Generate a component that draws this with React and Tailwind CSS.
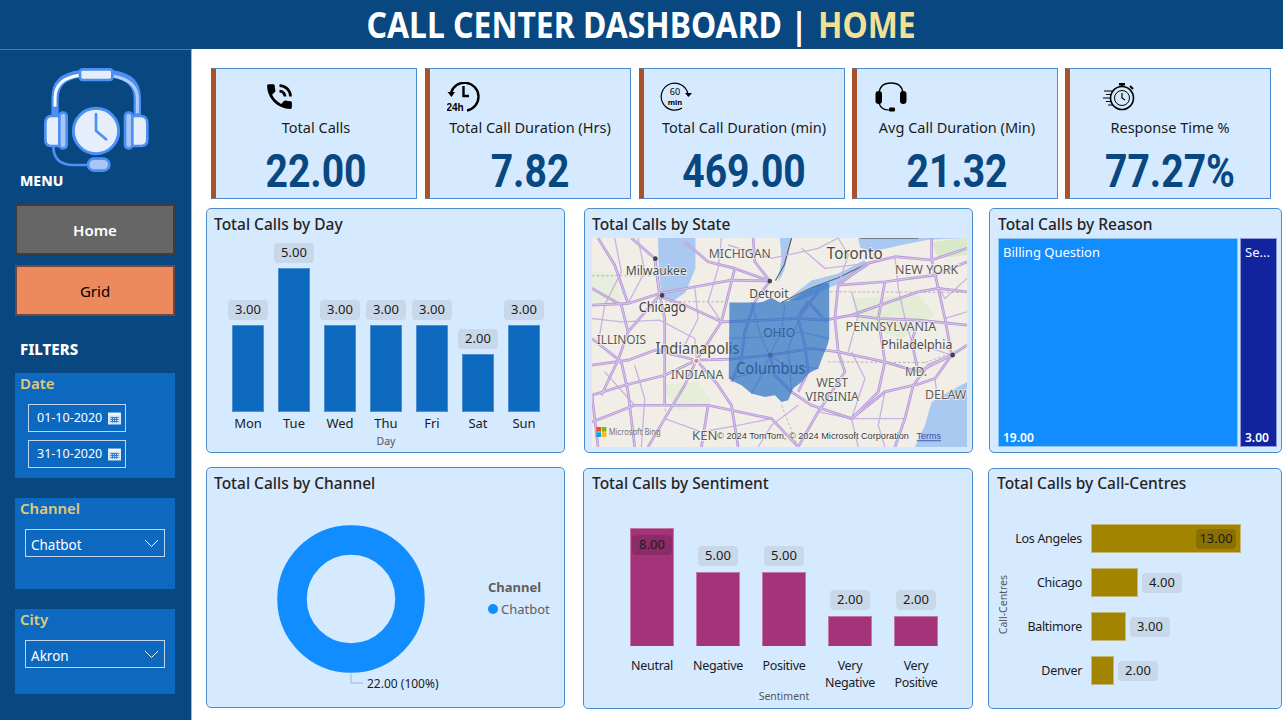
import { MdPhoneInTalk } from "react-icons/md";

const ROADS = [
  "M22 300 L130 295 L225 265 L330 245 L440 225 L555 228",
  "M225 275 L300 300 L410 350 L540 345 L640 340 L720 345 L800 330 L880 340 L1000 345 L1146 360",
  "M22 480 L130 465 L210 435 L335 465 L434 462 L555 450 L680 430 L760 440 L900 470 L1000 500 L1100 450",
  "M22 570 L120 540 L240 510 L335 465",
  "M335 465 L300 540 L240 640 L190 725",
  "M335 465 L400 540 L440 600 L460 725",
  "M555 450 L570 510 L620 560 L680 600 L800 640 L900 560 L985 540",
  "M210 160 L225 270 L240 340 L240 600",
  "M140 99 L210 160 L225 270",
  "M225 270 L130 380 L100 465 L50 570",
  "M555 228 L510 290 L480 380 L470 460 L440 530",
  "M555 228 L510 170 L505 99",
  "M555 228 L450 190 L370 170 L300 110",
  "M450 190 L410 350 L335 465",
  "M720 345 L670 290 L650 320 L640 340 L660 420 L670 500 L640 560",
  "M848 175 L760 240 L750 340 L760 440 L780 500 L700 620 L640 725",
  "M848 175 L930 155 L1040 165 L1146 130",
  "M1040 100 L1040 165 L1060 250 L1080 340 L1100 450 L1050 520 L990 540",
  "M760 240 L900 230 L1050 210 L1146 170",
  "M880 340 L900 470 L880 560 L800 640",
  "M22 650 L150 600 L370 600 L560 640 L640 725",
  "M370 600 L350 725",
  "M22 400 L110 470 L130 560 L150 725",
  "M985 540 L960 640 L930 725",
  "M985 540 L1030 480 L1100 450 L1146 420",
  "M1000 345 L980 410 L1000 500",
  "M800 330 L1000 260 L1060 250 L1146 260",
  "M22 250 L110 300 L130 380",
  "M40 99 L90 180 L130 295",
  "M640 340 L700 260",
  "M900 230 L880 340",
  "M22 570 L40 725",
];

const MINOR_ROADS = [
  "M22 340 L110 350 L225 345 L330 400 L335 465",
  "M90 99 L110 200 L60 300 L40 420",
  "M160 99 L180 200 L130 295",
  "M330 245 L340 340 L300 420 L210 435",
  "M410 99 L400 190 L370 290 L410 350",
  "M430 120 L560 160 L700 130 L760 99",
  "M650 130 L720 190 L848 175",
  "M434 400 L540 395 L650 380 L730 400",
  "M500 292 L530 400 L555 450 L600 480 L700 490",
  "M600 300 L590 380 L555 450 L520 530 L500 565",
  "M650 320 L610 430 L620 560",
  "M434 520 L520 500 L670 500",
  "M150 480 L180 580 L170 725",
  "M60 500 L150 600",
  "M240 640 L350 680 L460 660 L560 640",
  "M640 600 L560 660 L520 725",
  "M800 440 L840 520 L800 640 L820 725",
  "M900 560 L880 660 L900 725",
  "M940 250 L960 340 L980 410 L1100 450",
  "M800 260 L820 330 L790 440",
  "M1080 340 L1146 320",
  "M1050 520 L1060 600",
  "M760 99 L790 150 L760 240",
  "M930 155 L940 250",
  "M1146 220 L1080 280 L1060 250",
  "M700 620 L800 640 L960 640",
];

const LABELS = [
  ["MICHIGAN", 372, 158, 186, 38, "#5a5a5a"],
  ["Milwaukee", 123, 210, 183, 38, "#4a4a4a"],
  ["Toronto", 726, 161, 167, 48, "#4a4a4a"],
  ["NEW YORK", 930, 207, 190, 38, "#5a5a5a"],
  ["Detroit", 493, 278, 118, 38, "#4a4a4a"],
  ["Chicago", 162, 321, 142, 42, "#3c3c3c"],
  ["ILLINOIS", 36, 416, 148, 38, "#5a5a5a"],
  ["OHIO", 535, 397, 96, 38, "#4a4a4a"],
  ["PENNSYLVANIA", 782, 379, 272, 38, "#5a5a5a"],
  ["Indianapolis", 212, 447, 252, 48, "#4a4a4a"],
  ["Philadelphia", 888, 431, 214, 40, "#4a4a4a"],
  ["INDIANA", 258, 520, 158, 38, "#5a5a5a"],
  ["Columbus", 454, 505, 208, 48, "#3c3c3c"],
  ["MD.", 960, 513, 66, 38, "#5a5a5a"],
  ["WEST", 694, 545, 96, 36, "#5a5a5a"],
  ["VIRGINIA", 662, 586, 160, 36, "#5a5a5a"],
  ["DELAW", 1020, 581, 124, 38, "#5a5a5a"],
  ["KEN", 322, 703, 76, 38, "#5a5a5a"],
];

function OhioMap() {
  return (
    <svg viewBox="22 99 1124 626" preserveAspectRatio="none" className="block h-full w-full">
      <rect x="22" y="99" width="1124" height="626" fill="#f1eee8" />
      <path d="M800 280 L1000 270 L1050 330 L950 400 L820 360 Z" fill="#e3ecd4" />
      <path d="M1040 110 L1146 99 L1146 150 L1060 160 Z" fill="#d8e8c8" />
      <path d="M230 540 L340 530 L380 590 L280 620 Z" fill="#e4eed8" />
      <path d="M22 200 L90 200 L110 300 L22 290 Z" fill="#e7eedd" />
      <path d="M220 99 L332 99 L332 190 L302 262 L258 292 L230 268 L222 190 Z" fill="#a9c9f1" />
      <path d="M585 99 L622 99 L598 196 L580 232 L590 160 Z" fill="#a9c9f1" />
      <path d="M606 284 L680 226 L760 205 L838 166 L852 182 L770 232 L700 262 L640 286 Z" fill="#a9c9f1" />
      <path d="M820 99 L1146 99 L1030 104 L950 120 L860 140 L826 128 Z" fill="#a9c9f1" />
      <path d="M1146 530 L1146 725 L990 725 L1020 660 L1040 590 L1100 555 Z" fill="#a9c9f1" />
      <path d="M620 99 L598 180 L572 226" fill="none" stroke="#555" strokeWidth="3" />
      <path d="M590 292 L680 248 L760 218 L846 176" fill="none" stroke="#666" strokeWidth="3" />
      <path d="M826 99 L1000 99" fill="none" stroke="#666" strokeWidth="5" />
      <path d="M22 212 L220 212 M240 290 L434 290 M242 330 L242 620 M735 260 L1146 262 M730 470 L1020 472 M1020 472 L1140 430 M590 600 L640 725" fill="none" stroke="#999" strokeWidth="2" strokeDasharray="8 6" />
      {MINOR_ROADS.map((d) => (
        <path key={d} d={d} fill="none" stroke="#c8b4e0" strokeWidth="4" strokeLinejoin="round" />
      ))}
      {ROADS.map((d) => (
        <path key={d} d={d} fill="none" stroke="#b596d6" strokeWidth="8" strokeLinejoin="round" />
      ))}
      {ROADS.map((d) => (
        <path key={`${d}-in`} d={d} fill="none" stroke="#d8c8ec" strokeWidth="3" strokeLinejoin="round" />
      ))}
      <circle cx="212" cy="161" r="7" fill="#444" />
      <circle cx="232" cy="271" r="7" fill="#444" />
      <circle cx="555" cy="228" r="7" fill="#444" />
      <circle cx="1103" cy="450" r="7" fill="#444" />
      <circle cx="335" cy="467" r="8" fill="#e58a5c" stroke="#fff" strokeWidth="3" />
      {LABELS.map(([t, x, y, w, s, c]) => (
        <text key={t} x={x} y={y} textLength={w} lengthAdjust="spacingAndGlyphs" fontSize={s} fill={c} stroke="#f5f3ee" strokeWidth="4" paintOrder="stroke" fontFamily="'Noto Sans', sans-serif">
          {t}
        </text>
      ))}
      <path
        d="M434 292 L520 292 L535 290 L560 278 L585 292 L610 288 L650 265 L700 240 L733 232 L733 400 L728 420 L715 450 L700 490 L670 505 L650 530 L625 550 L610 585 L590 590 L570 570 L540 575 L500 565 L470 540 L445 528 L432 520 Z"
        fill="#1f6ac2"
        fillOpacity="0.68"
      />
      <circle cx="557" cy="450" r="7" fill="#3d6a9e" />
      <rect x="35" y="665" width="14" height="14" fill="#f25022" />
      <rect x="51" y="665" width="14" height="14" fill="#7fba00" />
      <rect x="35" y="681" width="14" height="14" fill="#00a4ef" />
      <rect x="51" y="681" width="14" height="14" fill="#ffb900" />
      <text x="72" y="690" textLength="156" lengthAdjust="spacingAndGlyphs" fontSize="26" fill="#777" fontFamily="'Noto Sans', sans-serif">Microsoft Bing</text>
      <text x="397" y="702" textLength="575" lengthAdjust="spacingAndGlyphs" fontSize="27" fill="#333" stroke="#fff" strokeWidth="2" paintOrder="stroke" fontFamily="'Liberation Sans', sans-serif">© 2024 TomTom, © 2024 Microsoft Corporation</text>
      <text x="995" y="702" textLength="73" lengthAdjust="spacingAndGlyphs" fontSize="27" fill="#3a4fa8" textDecoration="underline" fontFamily="'Liberation Sans', sans-serif">Terms</text>
    </svg>
  );
}

function Logo() {
  return (
    <svg viewBox="0 0 390 336" className="ml-[15px] mt-[10px] block h-[112px] w-[130px]" fill="none">
      <path d="M75 165 V115 Q75 50 150 42 H245 Q322 50 322 115 V165" stroke="#4a90f5" strokeWidth="22" />
      <path d="M75 140 V115 Q75 55 150 46" stroke="#ffffff" strokeWidth="9" />
      <path d="M322 160 V115 Q322 62 250 48" stroke="#b4cdf8" strokeWidth="9" />
      <rect x="150" y="28" width="97" height="32" rx="8" fill="#e6edfb" stroke="#4a90f5" strokeWidth="8" />
      <path d="M92 168 H62 Q46 170 46 190 V238 Q46 258 62 258 H92 Z" fill="#e6edfb" stroke="#4a90f5" strokeWidth="8" />
      <path d="M304 168 H334 Q352 170 352 190 V238 Q352 258 334 258 H304 Z" fill="#e6edfb" stroke="#4a90f5" strokeWidth="8" />
      <rect x="88" y="158" width="22" height="107" rx="10" fill="#a9c6f7" stroke="#4a90f5" strokeWidth="8" />
      <rect x="285" y="158" width="22" height="107" rx="10" fill="#a9c6f7" stroke="#4a90f5" strokeWidth="8" />
      <circle cx="198" cy="213" r="68" fill="#e6edfb" stroke="#4a90f5" strokeWidth="9" />
      <path d="M198 162 V212 L228 238" stroke="#4a90f5" strokeWidth="8" strokeLinecap="round" strokeLinejoin="round" />
      <path d="M70 258 Q70 315 130 315 H175" stroke="#4a90f5" strokeWidth="8" />
      <rect x="174" y="296" width="64" height="36" rx="18" fill="#a9c6f7" stroke="#4a90f5" strokeWidth="8" />
    </svg>
  );
}

function Clock24() {
  return (
    <svg viewBox="0 0 33 30" className="h-[30px] w-[33px]" fill="none">
      <path d="M4 11 A14 14 0 1 1 20 28.5" stroke="#000" strokeWidth="2.4" />
      <path d="M0.5 10 H8 L4.5 15 Z" fill="#000" />
      <path d="M16.5 4 V14 H22" stroke="#000" strokeWidth="2.4" />
      <text x="-0.5" y="29" fontSize="10" fontWeight="700" fill="#000" fontFamily="'Liberation Sans', sans-serif">24h</text>
    </svg>
  );
}

function Clock60() {
  return (
    <svg viewBox="0 0 32 30" className="h-[30px] w-[32px]" fill="none">
      <path d="M28 12 A13.5 13.5 0 1 0 22 26" stroke="#000" strokeWidth="1.2" />
      <path d="M25 11 H32 L28.5 15 Z" fill="#000" />
      <text x="15" y="13" textAnchor="middle" fontSize="9" fill="#000" fontFamily="'Noto Sans', sans-serif">60</text>
      <text x="15" y="23" textAnchor="middle" fontSize="7.5" fontWeight="700" fill="#000" fontFamily="'Noto Sans', sans-serif">min</text>
    </svg>
  );
}

function Headset() {
  return (
    <svg viewBox="0 0 32 30" className="h-[30px] w-[32px]" fill="none">
      <path d="M4 13 Q4 1 16 1 Q28 1 28 13" stroke="#000" strokeWidth="1.4" />
      <rect x="0.5" y="9" width="6.5" height="13" rx="3.2" fill="#000" />
      <rect x="25" y="9" width="6.5" height="13" rx="3.2" fill="#000" />
      <path d="M4 21 Q6 28 14 28" stroke="#000" strokeWidth="1.2" />
      <rect x="14" y="25.5" width="6" height="4" rx="1" fill="#000" />
    </svg>
  );
}

function Stopwatch() {
  return (
    <svg viewBox="0 0 32 28" className="h-[28px] w-[32px]" fill="none">
      <circle cx="19" cy="15" r="11.5" stroke="#000" strokeWidth="1.6" />
      <circle cx="19" cy="15" r="7.5" stroke="#000" strokeWidth="1" />
      <path d="M19 10 V15 L22 17" stroke="#000" strokeWidth="1.2" />
      <rect x="16" y="0" width="6" height="2.5" fill="#000" />
      <rect x="18" y="2" width="2" height="2" fill="#000" />
      <path d="M27 3 L30 6" stroke="#000" strokeWidth="2" />
      <path d="M1 8 H10 M3 11.5 H8 M0 15 H7 M3 18.5 H8 M5 22 H10" stroke="#000" strokeWidth="1.2" />
    </svg>
  );
}

function CalendarIcon() {
  return (
    <svg viewBox="0 0 13 13" className="h-[13px] w-[13px]" fill="none">
      <rect x="0.5" y="1" width="12" height="11" fill="#cfe0f5" stroke="#dfeaf7" />
      <rect x="1" y="1" width="11" height="2.5" fill="#f2f6fb" />
      <path d="M2.5 5.5 H10.5 M2.5 7.5 H10.5 M2.5 9.5 H10.5 M4.5 5 V10.5 M6.5 5 V10.5 M8.5 5 V10.5" stroke="#3b78bf" strokeWidth="1" />
    </svg>
  );
}

function Chevron() {
  return (
    <svg viewBox="0 0 15 9" className="h-[9px] w-[15px]" fill="none">
      <path d="M1 1 L7.5 7.5 L14 1" stroke="#fff" strokeWidth="1" />
    </svg>
  );
}

function Slicer({ label, value, height }) {
  return (
    <div className={`bg-[#0d68bf] ${height}`}>
      <div className="pl-[5px] text-[15px] font-semibold leading-[20px] text-[#e3ca74]">{label}</div>
      <div className="ml-[10px] mt-[11px] flex h-[28px] w-[140px] items-center justify-between border border-[#c3d5ec] px-[5px] text-[13.5px] text-white">
        <span className="pt-[5px]">{value}</span>
        <Chevron />
      </div>
    </div>
  );
}

function DateBox({ value, className }) {
  return (
    <div className={`ml-[13px] flex w-[98px] items-center justify-between border border-[#c3d5ec] pl-[8px] pr-[4px] text-[12.5px] text-white ${className}`}>
      <span>{value}</span>
      <CalendarIcon />
    </div>
  );
}

function Sidebar() {
  return (
    <aside className="flex h-[671px] w-[192px] shrink-0 flex-col border-r border-t border-r-[#9db8d6] border-t-[#4b7ba8] bg-[#094780] pl-[15px]">
      <Logo />
      <div className="ml-[5px] mt-px text-[14px] font-extrabold leading-[16px] text-white">MENU</div>
      <button className="mt-[15px] h-[51px] w-[160px] border-2 border-[#3d3d3d] bg-[#666666] pt-[2px] text-[15px] font-semibold text-white">Home</button>
      <button className="mt-[10px] h-[51px] w-[160px] border-2 border-[#6b4a3f] bg-[#ec8a5e] pt-[2px] text-[15px] text-black">Grid</button>
      <div className="ml-[5px] mt-[24px] text-[15px] font-extrabold leading-[18px] text-white">FILTERS</div>
      <div className="mt-[15px] flex w-[160px] flex-col gap-[20px]">
        <div className="h-[105px] bg-[#0d68bf]">
          <div className="pl-[5px] text-[15px] font-semibold leading-[20px] text-[#e3ca74]">Date</div>
          <DateBox value="01-10-2020" className="mt-[11px] h-[28px]" />
          <DateBox value="31-10-2020" className="mt-[8px] h-[28px]" />
        </div>
        <Slicer label="Channel" value="Chatbot" height="h-[91px]" />
        <Slicer label="City" value="Akron" height="h-[85px]" />
      </div>
    </aside>
  );
}

const KPIS = [
  { label: "Total Calls", value: "22.00", icon: <MdPhoneInTalk size={33} color="#000" />, iconClass: "pl-[47px]", cardClass: "mr-px" },
  { label: "Total Call Duration (Hrs)", value: "7.82", icon: <Clock24 />, iconClass: "pl-[17px]", cardClass: "mr-px" },
  { label: "Total Call Duration (min)", value: "469.00", icon: <Clock60 />, iconClass: "pl-[16px]", cardClass: "" },
  { label: "Avg Call Duration (Min)", value: "21.32", icon: <Headset />, iconClass: "pl-[18px]", cardClass: "" },
  { label: "Response Time %", value: "77.27%", icon: <Stopwatch />, iconClass: "pl-[33px]", cardClass: "" },
];

function KpiCard({ label, value, icon, iconClass, cardClass }) {
  return (
    <div className={`flex h-[131px] w-[206px] flex-col border border-l-[5px] border-[#4b8ccc] border-l-[#a9532b] bg-[#d6eaff] pt-[12px] ${cardClass}`}>
      <div className={`flex h-[31px] items-center ${iconClass}`}>{icon}</div>
      <div className="mt-[5px] whitespace-nowrap text-center text-[14.5px] leading-[20px] text-[#1b1b1b]">{label}</div>
      <div className="mt-[9px] origin-center scale-x-[0.85] text-center font-['Roboto',sans-serif] text-[46px] font-bold leading-[50px] text-[#094780]">{value}</div>
    </div>
  );
}

function Pill({ children, dark }) {
  return (
    <div className={`flex h-[20px] w-[40px] shrink-0 items-center justify-center rounded-[4px] text-[13px] ${dark ? "bg-black/15" : "bg-[#c9d8e9]"} text-[#1b1b1b]`}>
      {children}
    </div>
  );
}

function Card({ title, className, children }) {
  return (
    <section className={`rounded-[5px] border border-[#4b8ccc] bg-[#d6eaff] ${className}`}>
      <h3 className="h-[22px] whitespace-nowrap text-[15.5px] font-medium leading-[22px] text-[#252423]">{title}</h3>
      {children}
    </section>
  );
}

const DAYS = [
  ["Mon", "3.00", 87],
  ["Tue", "5.00", 144],
  ["Wed", "3.00", 87],
  ["Thu", "3.00", 87],
  ["Fri", "3.00", 87],
  ["Sat", "2.00", 58],
  ["Sun", "3.00", 87],
];

function DayChart() {
  return (
    <Card title="Total Calls by Day" className="h-[245px] w-[359px] pl-[7px] pt-[4px]">
      <div className="ml-[14px] w-[316px]">
        <div className="mt-[9px] flex h-[168px] items-end gap-[6px]">
          {DAYS.map(([d, v, h]) => (
            <div key={d} className="flex w-[40px] flex-col items-center gap-[5px]">
              <Pill>{v}</Pill>
              <div className="w-[32px] border border-[#4d8fd0] bg-[#0d68bf]" style={{ height: h }} />
            </div>
          ))}
        </div>
        <div className="mt-[2px] flex gap-[6px]">
          {DAYS.map(([d]) => (
            <div key={d} className="w-[40px] text-center text-[13px] leading-[18px] text-[#1b1b1b]">{d}</div>
          ))}
        </div>
        <div className="mt-[2px] text-center text-[10.5px] leading-[14px] text-[#555]">Day</div>
      </div>
    </Card>
  );
}

function ChannelChart() {
  return (
    <Card title="Total Calls by Channel" className="h-[241px] w-[359px] pl-[7px] pt-[4px]">
      <div className="flex">
        <svg viewBox="0 0 170 170" className="ml-[63px] mt-[31px] h-[170px] w-[170px] shrink-0" fill="none">
          <circle cx="74" cy="74" r="59" stroke="#118dff" strokeWidth="29.5" />
          <path d="M74 149 V158 H86" stroke="#a9b4c0" strokeWidth="1" />
          <text x="90" y="163" fontSize="12" fill="#1b1b1b" fontFamily="'Noto Sans', sans-serif">22.00 (100%)</text>
        </svg>
        <div className="ml-[41px] mt-[84px]">
          <div className="text-[13px] font-bold leading-[18px] text-[#605e5c]">Channel</div>
          <div className="mt-[4px] flex items-center gap-[3px] text-[13px] leading-[18px] text-[#605e5c]">
            <span className="h-[10px] w-[10px] rounded-full bg-[#118dff]" />
            Chatbot
          </div>
        </div>
      </div>
    </Card>
  );
}

const SENTIMENT = [
  { label: ["Neutral"], value: "8.00", h: 118, inside: true },
  { label: ["Negative"], value: "5.00", h: 74 },
  { label: ["Positive"], value: "5.00", h: 74 },
  { label: ["Very", "Negative"], value: "2.00", h: 30 },
  { label: ["Very", "Positive"], value: "2.00", h: 30 },
];

function SentimentChart() {
  return (
    <Card title="Total Calls by Sentiment" className="ml-[18px] mt-px h-[241px] w-[390px] pl-[8px] pt-[3px]">
      <div className="ml-[27px] w-[330px]">
        <div className="mt-[34px] flex h-[118px] items-end">
          {SENTIMENT.map((s) => (
            <div key={s.label.join()} className="flex w-[66px] flex-col items-center gap-[6px]">
              {!s.inside && <Pill>{s.value}</Pill>}
              <div className="flex w-[44px] justify-center border-x border-t border-[#c07aa8] bg-[#a4337a] pt-[6px]" style={{ height: s.h }}>
                {s.inside && <Pill dark>{s.value}</Pill>}
              </div>
            </div>
          ))}
        </div>
        <div className="mt-[11px] flex h-[33px]">
          {SENTIMENT.map((s) => (
            <div key={s.label.join()} className="w-[66px] text-center text-[12.5px] leading-[17px] tracking-[-0.3px] text-[#1b1b1b]">
              {s.label.map((l) => (
                <div key={l}>{l}</div>
              ))}
            </div>
          ))}
        </div>
        <div className="text-center text-[10.5px] leading-[12px] text-[#555]">Sentiment</div>
      </div>
    </Card>
  );
}

const CENTRES = [
  ["Los Angeles", "13.00", 150],
  ["Chicago", "4.00", 47],
  ["Baltimore", "3.00", 35],
  ["Denver", "2.00", 23],
];

function CentresChart() {
  return (
    <Card title="Total Calls by Call-Centres" className="ml-[15px] mt-px h-[241px] w-[294px] pl-[8px] pt-[3px]">
      <div className="mt-[30px] flex">
        <div className="-ml-[2px] flex w-[15px] items-center justify-center">
          <span className="rotate-180 text-[10.5px] leading-[14px] text-[#555] [writing-mode:vertical-rl]">Call-Centres</span>
        </div>
        <div className="flex flex-col gap-[15px]">
          {CENTRES.map(([c, v, w], i) => (
            <div key={c} className="flex h-[29px] items-center">
              <div className="w-[72px] whitespace-nowrap pt-px text-right text-[12.5px] tracking-[-0.3px] text-[#1b1b1b]">{c}</div>
              <div className="ml-[9px] flex h-[29px] items-center justify-end border border-[#c4b676] bg-[#a38400] pr-[4px]" style={{ width: w }}>
                {i === 0 && <Pill dark>{v}</Pill>}
              </div>
              {i > 0 && <div className="ml-[4px]"><Pill>{v}</Pill></div>}
            </div>
          ))}
        </div>
      </div>
    </Card>
  );
}

function App() {
  return (
    <div className="flex h-[720px] w-full flex-col overflow-hidden bg-white font-['Noto_Sans',sans-serif]">
      <header className="flex h-[49px] shrink-0 items-center justify-center bg-[#094780] text-white">
        <div className="scale-x-[0.912] whitespace-nowrap text-[35px] font-bold leading-[49px]">
          CALL CENTER DASHBOARD | <span className="ml-[2px] text-[#f0e196]">HOME</span>
        </div>
      </header>
      <div className="flex">
        <Sidebar />
        <main className="flex flex-col pl-[14px]">
          <div className="ml-[5px] mt-[19px] flex gap-[7px]">
            {KPIS.map((k) => (
              <KpiCard key={k.label} {...k} />
            ))}
          </div>
          <div className="mt-[9px] flex items-start">
            <DayChart />
            <Card title="Total Calls by State" className="ml-[19px] h-[245px] w-[389px] pl-[7px] pt-[4px]">
              <div className="mt-[3px] h-[209px] w-[375px]">
                <OhioMap />
              </div>
            </Card>
            <Card title="Total Calls by Reason" className="ml-[16px] h-[245px] w-[293px] pl-[8px] pt-[4px]">
              <div className="mt-[3px] flex h-[209px] gap-[2px]">
                <div className="flex w-[240px] flex-col justify-between border border-[#8cc4fb] bg-[#118dff] px-[4px] pt-[3px] text-white">
                  <span className="text-[13px] leading-[20px]">Billing Question</span>
                  <span className="text-[12px] font-semibold leading-[16px]">19.00</span>
                </div>
                <div className="flex w-[37px] flex-col justify-between border border-[#8c98d8] bg-[#12239e] px-[4px] pt-[3px] text-white">
                  <span className="text-[13px] leading-[20px]">Se...</span>
                  <span className="text-[12px] font-semibold leading-[16px]">3.00</span>
                </div>
              </div>
            </Card>
          </div>
          <div className="mt-[14px] flex items-start">
            <ChannelChart />
            <SentimentChart />
            <CentresChart />
          </div>
        </main>
      </div>
    </div>
  );
}

export default App;
